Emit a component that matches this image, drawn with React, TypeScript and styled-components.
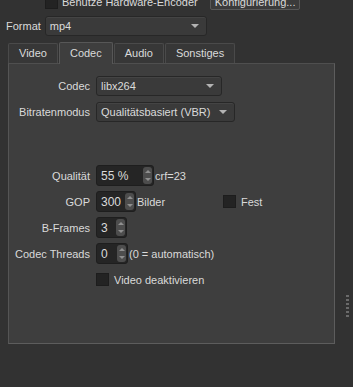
import { FC, ReactNode } from 'react'
import styled, { createGlobalStyle } from 'styled-components'

const GlobalStyle = createGlobalStyle`
  html, body {
    margin: 0;
    padding: 0;
    background: #323232;
  }
  body {
    font-family: "Liberation Sans", Arial, sans-serif;
    font-size: 11px;
    color: #dadada;
  }
`

const Page = styled.div`
  display: flex;
  height: 387px;
  overflow: hidden;
`

const Main = styled.div`
  display: flex;
  flex-direction: column;
  width: 337px;
`

const TopRow = styled.div`
  display: flex;
  align-items: center;
  height: 20px;
  margin-top: -8px;
  padding-left: 45px;
`

const FormatRow = styled.div`
  display: flex;
  align-items: center;
  gap: 4px;
  height: 20px;
  margin-top: 4px;
  padding-left: 6px;
`

const Label = styled.span`
  white-space: nowrap;
`

const PushButton = styled.button`
  height: 16px;
  margin-left: 12px;
  padding: 0 4px;
  border: 1px solid #585858;
  border-radius: 2px;
  background: #3b3b3b;
  color: #dadada;
  font: inherit;
  line-height: 14px;
`

const CheckBox = styled.span<{ $gap?: number }>`
  display: inline-block;
  flex: none;
  width: 13px;
  height: 13px;
  margin-right: ${({ $gap = 5 }) => $gap}px;
  box-sizing: border-box;
  border: 1px solid #1d1d1d;
  background: #232323;
`

const Check = styled.label`
  display: inline-flex;
  align-items: center;
  white-space: nowrap;
`

const Combo = styled.div<{ $width: number }>`
  display: flex;
  align-items: center;
  justify-content: space-between;
  width: ${({ $width }) => $width}px;
  height: 20px;
  box-sizing: border-box;
  padding: 0 7px 0 4px;
  border: 1px solid #272727;
  border-radius: 3px;
  background: #3a3a3a;
  box-shadow: inset 0 1px 0 #444;
  white-space: nowrap;
`

const Arrow = styled.span`
  width: 0;
  height: 0;
  border-left: 4px solid transparent;
  border-right: 4px solid transparent;
  border-top: 4px solid #b3b3b3;
`

const TabBar = styled.div`
  display: flex;
  align-items: flex-end;
  gap: 1px;
  height: 22px;
  margin-top: 5px;
  padding-left: 8px;
`

const Tab = styled.div<{ $active?: boolean }>`
  height: ${({ $active }) => ($active ? 22 : 20)}px;
  box-sizing: border-box;
  padding: 0 10px;
  border: 1px solid ${({ $active }) => ($active ? '#575757' : '#4a4a4a')};
  border-bottom: none;
  border-radius: 2px 2px 0 0;
  background: ${({ $active }) => ($active ? '#3e3e3e' : '#373737')};
  line-height: ${({ $active }) => ($active ? 20 : 19)}px;
  margin-bottom: ${({ $active }) => ($active ? -1 : 0)}px;
  position: relative;
  z-index: ${({ $active }) => ($active ? 1 : 0)};
`

const Pane = styled.div`
  margin-left: 8px;
  width: 327px;
  height: 281px;
  box-sizing: border-box;
  border: 1px solid #555;
  border-top-color: #4f4f4f;
  border-right-color: #5d5d5d;
  border-bottom-color: #5d5d5d;
  background: #3e3e3e;
  padding-top: 11px;
`

const Form = styled.div`
  display: grid;
  grid-template-columns: 81px 1fr;
  column-gap: 6px;
  row-gap: 5px;
  grid-auto-rows: minmax(21px, auto);
`

const RowLabel = styled.span`
  display: flex;
  align-items: center;
  justify-content: flex-end;
  white-space: nowrap;
`

const Field = styled.div`
  display: flex;
  align-items: center;
  white-space: nowrap;
`

const Spacer = styled.div`
  grid-column: 1 / -1;
  height: 33px;
`

const UnitGroup = styled.span<{ $width: number }>`
  display: inline-flex;
  align-items: center;
  width: ${({ $width }) => $width}px;
`

const Spin = styled.div<{ $width: number }>`
  display: flex;
  align-items: center;
  justify-content: space-between;
  width: ${({ $width }) => $width}px;
  height: 21px;
  box-sizing: border-box;
  padding: 1px 1px 1px 4px;
  margin-right: 1px;
  border: 1px solid #1e1e1e;
  border-radius: 3px;
  background: #252525;
  font-size: 12px;
`

const SpinButtons = styled.span`
  display: flex;
  flex-direction: column;
  align-items: center;
  justify-content: space-around;
  width: 9px;
  height: 100%;
  border-radius: 3px;
  background: #4d4d4d;
`

const Tri = styled.span<{ $up?: boolean }>`
  width: 0;
  height: 0;
  border-left: 3px solid transparent;
  border-right: 3px solid transparent;
  ${({ $up }) => ($up ? 'border-bottom' : 'border-top')}: 3px solid #8f8f8f;
`

const Splitter = styled.div`
  flex: 1;
  display: flex;
  justify-content: center;
`

const Grip = styled.div`
  width: 3px;
  height: 24px;
  margin-top: 295px;
  margin-left: 4px;
  background: repeating-linear-gradient(to bottom, #6a6a6a 0 2px, transparent 2px 4px);
`

const SpinBox: FC<{ width: number; value: string }> = ({ width, value }) => (
  <Spin $width={width}>
    <span>{value}</span>
    <SpinButtons>
      <Tri $up />
      <Tri />
    </SpinButtons>
  </Spin>
)

const ComboBox: FC<{ width: number; children: ReactNode }> = ({ width, children }) => (
  <Combo $width={width}>
    <span>{children}</span>
    <Arrow />
  </Combo>
)

const tabs = ['Video', 'Codec', 'Audio', 'Sonstiges']

export default function App() {
  return (
    <>
      <GlobalStyle />
      <Page>
        <Main>
          <TopRow>
            <Check>
              <CheckBox $gap={4} />
              Benutze Hardware-Encoder
            </Check>
            <PushButton>Konfigurierung...</PushButton>
          </TopRow>

          <FormatRow>
            <Label>Format</Label>
            <ComboBox width={162}>mp4</ComboBox>
          </FormatRow>

          <TabBar>
            {tabs.map((t) => (
              <Tab key={t} $active={t === 'Codec'}>{t}</Tab>
            ))}
          </TabBar>

          <Pane>
            <Form>
              <RowLabel>Codec</RowLabel>
              <Field><ComboBox width={126}>libx264</ComboBox></Field>

              <RowLabel>Bitratenmodus</RowLabel>
              <Field><ComboBox width={139}>Qualitätsbasiert (VBR)</ComboBox></Field>

              <Spacer />

              <RowLabel>Qualität</RowLabel>
              <Field>
                <SpinBox width={58} value="55 %" />
                crf=23
              </Field>

              <RowLabel>GOP</RowLabel>
              <Field>
                <UnitGroup $width={127}>
                  <SpinBox width={40} value="300" />
                  Bilder
                </UnitGroup>
                <Check>
                  <CheckBox />
                  Fest
                </Check>
              </Field>

              <RowLabel>B-Frames</RowLabel>
              <Field><SpinBox width={31} value="3" /></Field>

              <RowLabel>Codec Threads</RowLabel>
              <Field>
                <SpinBox width={32} value="0" />
                (0 = automatisch)
              </Field>

              <span />
              <Field>
                <Check>
                  <CheckBox />
                  Video deaktivieren
                </Check>
              </Field>
            </Form>
          </Pane>
        </Main>
        <Splitter>
          <Grip />
        </Splitter>
      </Page>
    </>
  )
}
